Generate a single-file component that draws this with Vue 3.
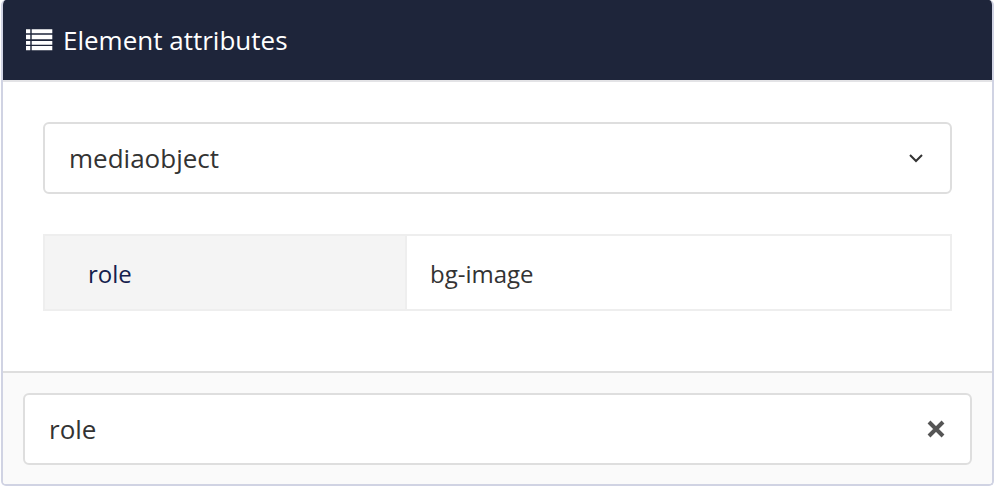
<script setup>
import { ref } from 'vue'
const title = ref('Element attributes')
const selected = ref('mediaobject')
const attributes = ref([{ name: 'role', value: 'bg-image' }])
const search = ref('role')
</script>

<template>
  <div class="panel">
    <div class="panel-header">
      <svg class="list-icon" width="27" height="22" viewBox="0 0 27 22">
        <path d="M0 .3h4.300v4H0zM5.700 .3h20.600v4H5.700zM0 5.700h4.300v4.600H0zM5.700 5.700h20.600v4.600H5.700zM0 12h4.300v3.700H0zM5.700 12h20.600v3.700H5.700zM0 17h4.300v4.300H0zM5.700 17h20.600v4.300H5.700z" fill="#fff" />
      </svg>
      <span>{{ title }}</span>
    </div>
    <div class="panel-body">
      <div class="select-box">
        <span>{{ selected }}</span>
        <svg width="16" height="10" viewBox="0 0 16 10">
          <path d="M2 2l6 6 6-6" fill="none" stroke="#333" stroke-width="2" />
        </svg>
      </div>
      <div v-for="attr in attributes" :key="attr.name" class="attr-row">
        <div class="attr-name">{{ attr.name }}</div>
        <div class="attr-value">{{ attr.value }}</div>
      </div>
    </div>
    <div class="panel-footer">
      <div class="search-box">
        <span>{{ search }}</span>
        <svg width="18" height="18" viewBox="0 0 18 18">
          <path d="M2 2l14 14M16 2L2 16" fill="none" stroke="#555" stroke-width="4" />
        </svg>
      </div>
    </div>
  </div>
</template>

<style>
body {
  background: #fff;
}
</style>

<style scoped>
.panel {
  box-sizing: border-box;
  width: 993px;
  height: 486px;
  margin-left: 1px;
  display: flex;
  flex-direction: column;
  border: 2px solid #d0d3e3;
  border-top: none;
  border-radius: 5px;
  overflow: hidden;
  font-family: "Open Sans", sans-serif;
  color: #333;
}
.panel-header {
  box-sizing: border-box;
  height: 82px;
  flex: none;
  display: flex;
  align-items: center;
  gap: 10px;
  padding-left: 23px;
  background: #1e253a;
  border-bottom: 2px solid #e3e3e6;
  color: #fff;
  font-size: 26px;
}
.list-icon {
  flex: none;
}
.panel-body {
  flex: 1;
  padding: 40px 40px 0;
  background: #fff;
}
.select-box {
  box-sizing: border-box;
  height: 72px;
  display: flex;
  align-items: center;
  justify-content: space-between;
  padding: 0 26px 0 24px;
  border: 2px solid #dedede;
  border-radius: 6px;
  font-size: 26px;
}
.attr-row {
  box-sizing: border-box;
  height: 77px;
  margin-top: 40px;
  display: flex;
  border: 2px solid #eeeeee;
  font-size: 24px;
}
.attr-name {
  width: 362px;
  display: flex;
  align-items: center;
  padding: 2px 0 0 43px;
  box-sizing: border-box;
  background: #f4f4f4;
  border-right: 2px solid #eeeeee;
  color: #14204c;
}
.attr-value {
  flex: 1;
  display: flex;
  align-items: center;
  padding: 2px 0 0 23px;
}
.panel-footer {
  box-sizing: border-box;
  height: 113px;
  flex: none;
  padding: 20px;
  background: #fafafa;
  border-top: 2px solid #dedede;
}
.search-box {
  box-sizing: border-box;
  height: 72px;
  display: flex;
  align-items: center;
  justify-content: space-between;
  padding: 0 25px 0 24px;
  background: #fff;
  border: 2px solid #dedede;
  border-radius: 6px;
  font-size: 26px;
}
</style>
